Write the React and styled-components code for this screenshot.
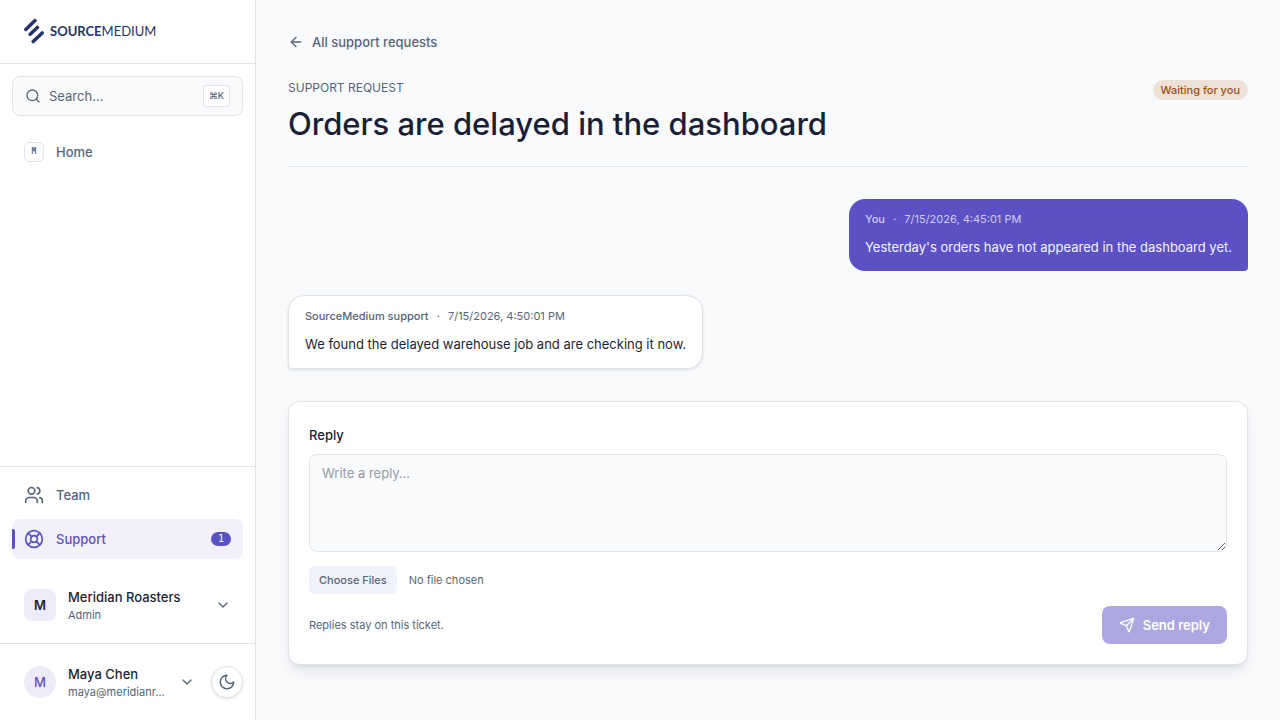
import React from "react";
import styled, { createGlobalStyle, css } from "styled-components";
import { ArrowLeft, ChevronDown, LifeBuoy, Search, Send, Users } from "lucide-react";

const c = {
  accent: "#5b51c4",
  accentSoft: "#f1f0fb",
  accentTint: "#eeebf9",
  page: "#f9fafc",
  surface: "#ffffff",
  line: "#e1e5eb",
  ink: "#1a1f36",
  muted: "#56657a",
  navy: "#2a3368",
};
const mono = '"DejaVu Sans Mono", "Liberation Mono", monospace';

const GlobalStyle = createGlobalStyle`
  *, *::before, *::after { box-sizing: border-box; }
  body {
    margin: 0;
    background: ${c.page};
    color: ${c.ink};
    font: 400 13px/20px Inter, "Liberation Sans", sans-serif;
    -webkit-font-smoothing: antialiased;
  }
  h1, p { margin: 0; }
  button, textarea, input { font: inherit; }
  button { cursor: pointer; }
`;

const Shell = styled.div`
  display: flex;
  min-height: 100vh;
`;

const Sidebar = styled.aside`
  position: sticky;
  top: 0;
  display: flex;
  flex-direction: column;
  flex: none;
  width: 256px;
  height: 100vh;
  background: ${c.surface};
  border-right: 1px solid ${c.line};
`;

const Brand = styled.a`
  display: flex;
  align-items: center;
  gap: 6px;
  height: 64px;
  padding: 0 24px 2px;
  border-bottom: 1px solid ${c.line};
  color: ${c.navy};
  font-family: Lato, Inter, sans-serif;
  font-size: 13px;
  font-weight: 400;
  text-decoration: none;

  strong { font-weight: 700; }
`;

const SearchButton = styled.button`
  display: flex;
  align-items: center;
  gap: 8px;
  height: 40px;
  margin: 12px;
  padding: 0 12px;
  border: 1px solid ${c.line};
  border-radius: 8px;
  background: ${c.page};
  color: ${c.muted};
  text-align: left;
`;

const Grow = styled.span`
  flex: 1;
`;

const Kbd = styled.kbd`
  padding: 0 5px;
  border: 1px solid ${c.line};
  border-radius: 4px;
  background: ${c.surface};
  color: ${c.muted};
  font: 500 9px/20px Inter, "DejaVu Sans Mono", sans-serif;
`;

const Nav = styled.nav`
  display: flex;
  flex-direction: column;
  gap: 4px;
  padding: ${(p) => (p.$footer ? "8px 12px" : "4px 12px")};
  ${(p) => p.$footer && css`
    margin-top: auto;
    border-top: 1px solid ${c.line};
  `}
`;

const NavItem = styled.a`
  position: relative;
  display: flex;
  align-items: center;
  gap: 12px;
  height: 40px;
  padding: 0 12px;
  border-radius: 8px;
  color: ${(p) => (p.$active ? c.accent : c.muted)};
  background: ${(p) => (p.$active ? c.accentSoft : "transparent")};
  font-weight: 500;
  text-decoration: none;

  ${(p) => p.$active && css`
    &::before {
      content: "";
      position: absolute;
      left: 0;
      top: 10px;
      width: 3px;
      height: 20px;
      border-radius: 0 2px 2px 0;
      background: ${c.accent};
    }
  `}
`;

const Monogram = styled.span`
  width: 20px;
  height: 20px;
  border: 1px solid ${c.line};
  border-radius: 5px;
  font: 700 8px/18px ${mono};
  text-align: center;
`;

const Count = styled.span`
  width: 20px;
  border-radius: 8px;
  background: ${c.accent};
  color: #fff;
  font: 400 10px/14px ${mono};
  text-align: center;
`;

const AccountRow = styled.div`
  display: flex;
  align-items: center;
  gap: 12px;
  height: 76px;
  padding: 0 12px;
  ${(p) => p.$divided && css`
    border-top: 1px solid ${c.line};
    height: 77px;
  `}
`;

const AccountButton = styled.button`
  display: flex;
  flex: 1;
  align-items: center;
  gap: 12px;
  min-width: 0;
  padding: ${(p) => (p.$compact ? "0 4px 0 12px" : "0 12px")};
  border: 0;
  background: none;
  color: ${c.muted};
  text-align: left;
`;

const Avatar = styled.span`
  flex: none;
  width: 32px;
  height: 32px;
  border-radius: ${(p) => (p.$round ? "50%" : "8px")};
  background: ${c.accentTint};
  color: ${(p) => (p.$round ? c.accent : c.ink)};
  font-size: 13px;
  font-weight: ${(p) => (p.$round ? 500 : 600)};
  line-height: 32px;
  text-align: center;
`;

const AccountText = styled.span`
  display: flex;
  flex: 1;
  flex-direction: column;
  min-width: 0;
  font-size: 11px;
  line-height: 16px;

  span { white-space: nowrap; }
  span:first-child {
    color: ${c.ink};
    font-size: 13px;
    font-weight: 500;
    line-height: 20px;
  }
`;

const ThemeButton = styled.button`
  display: grid;
  place-items: center;
  flex: none;
  width: 32px;
  height: 32px;
  padding: 0;
  border: 1px solid ${c.line};
  border-radius: 50%;
  background: ${c.surface};
  color: ${c.muted};
  box-shadow: 0 1px 3px rgb(0 0 0 / 0.12);
`;

const Main = styled.main`
  flex: 1;
  min-width: 0;
  padding: 32px;
`;

const BackLink = styled.a`
  display: inline-flex;
  align-items: center;
  gap: 8px;
  color: ${c.muted};
  font-weight: 500;
  text-decoration: none;
  vertical-align: top;
`;

const PageHeader = styled.header`
  display: flex;
  align-items: flex-start;
  justify-content: space-between;
  gap: 16px;
  margin-top: 28px;
  padding-bottom: 22px;
  border-bottom: 1px solid ${c.line};
`;

const Eyebrow = styled.p`
  color: ${c.muted};
  font-size: 12px;
  line-height: 16px;
`;

const Title = styled.h1`
  margin-top: 8px;
  font-size: 31px;
  font-weight: 500;
  line-height: 40px;
`;

const Status = styled.span`
  flex: none;
  padding: 0 8px;
  border-radius: 10px;
  background: #ede1d8;
  color: #a0520f;
  font-size: 11px;
  font-weight: 500;
  line-height: 20px;
`;

const Thread = styled.section`
  display: flex;
  flex-direction: column;
  gap: 24px;
  padding: 32px 0;
`;

const Message = styled.article`
  align-self: ${(p) => (p.$own ? "flex-end" : "flex-start")};
  max-width: 80%;
  padding: 12px 16px;
  border-radius: ${(p) => (p.$own ? "16px 16px 4px 16px" : "16px 16px 16px 4px")};
  background: ${(p) => (p.$own ? c.accent : c.surface)};
  color: ${(p) => (p.$own ? "#f4f3fc" : c.ink)};
  ${(p) => !p.$own && css`
    border: 1px solid ${c.line};
    box-shadow: 0 1px 3px rgb(0 0 0 / 0.12);
  `}

  p { line-height: 24px; }
`;

const Meta = styled.header`
  display: flex;
  gap: 8px;
  margin-bottom: 8px;
  color: ${(p) => (p.$own ? "#d0ccf0" : c.muted)};
  font-size: 11px;
  line-height: 16px;

  span { font-weight: 500; }
`;

const Composer = styled.form`
  padding: 20px;
  border: 1px solid ${c.line};
  border-radius: 12px;
  background: ${c.surface};
  box-shadow: 0 8px 16px -4px rgb(15 23 42 / 0.12), 0 2px 4px -2px rgb(15 23 42 / 0.12);
`;

const FieldLabel = styled.label`
  display: block;
  margin-bottom: 6px;
  font-weight: 500;
  line-height: 26px;
`;

const ReplyBox = styled.textarea`
  display: block;
  width: 100%;
  height: 98px;
  padding: 8px 12px;
  border: 1px solid ${c.line};
  border-radius: 8px;
  background: ${c.page};
  color: ${c.ink};
  resize: vertical;

  &::placeholder { color: #969ba6; }
`;

const FilePicker = styled.input`
  display: block;
  width: 100%;
  height: 28px;
  margin: 14px 0 12px;
  color: ${c.muted};
  font-size: 11px;
  line-height: 16px;

  &::file-selector-button {
    margin: 0 12px 0 0;
    padding: 6px 10px;
    border: 0;
    border-radius: 5px;
    background: #f0f3f9;
    color: ${c.muted};
    font: inherit;
    font-weight: 500;
  }
`;

const ComposerFooter = styled.div`
  display: flex;
  align-items: center;
  justify-content: space-between;
  color: ${c.muted};
  font-size: 11px;
`;

const SendButton = styled.button`
  display: flex;
  align-items: center;
  gap: 8px;
  height: 38px;
  padding: 0 16px;
  border: 1px solid transparent;
  border-radius: 8px;
  background: ${c.accent};
  color: #fff;
  font-size: 13px;
  font-weight: 600;

  &:disabled { opacity: 0.5; cursor: default; }
`;

function BrandMark() {
  return (
    <svg width="20" height="26" viewBox="0 0 20 26" fill="none" stroke="currentColor" strokeWidth="3.5" strokeLinecap="round" aria-hidden="true">
      <path d="M1.8 11.4 11 2.6M6.2 16.2l7.2-6.8M9.2 23.6l9-8.7" />
    </svg>
  );
}

function MoonIcon() {
  return (
    <svg width="18" height="18" viewBox="0 0 24 24" fill="none" stroke="currentColor" strokeWidth="2" strokeLinecap="round" strokeLinejoin="round" aria-hidden="true">
      <path d="M12 3a6 6 0 0 0 9 9 9 9 0 1 1-9-9Z" />
    </svg>
  );
}

function ChatMessage({ own, author, time, children }) {
  return (
    <Message $own={own}>
      <Meta $own={own}>
        <span>{author}</span>
        <span aria-hidden="true">·</span>
        <time>{time}</time>
      </Meta>
      <p>{children}</p>
    </Message>
  );
}

export default function App() {
  return (
    <>
      <GlobalStyle />
      <Shell>
        <Sidebar>
          <Brand href="#">
            <BrandMark />
            <span><strong>SOURCE</strong>MEDIUM</span>
          </Brand>
          <SearchButton type="button">
            <Search size={16} />
            <Grow>Search…</Grow>
            <Kbd>⌘K</Kbd>
          </SearchButton>
          <Nav aria-label="Main">
            <NavItem href="#home"><Monogram>M</Monogram>Home</NavItem>
          </Nav>
          <Nav $footer aria-label="Workspace">
            <NavItem href="#team"><Users size={20} />Team</NavItem>
            <NavItem href="#support" $active aria-current="page">
              <LifeBuoy size={20} />
              <Grow>Support</Grow>
              <Count>1</Count>
            </NavItem>
          </Nav>
          <AccountRow>
            <AccountButton type="button">
              <Avatar>M</Avatar>
              <AccountText><span>Meridian Roasters</span><span>Admin</span></AccountText>
              <ChevronDown size={16} />
            </AccountButton>
          </AccountRow>
          <AccountRow $divided>
            <AccountButton type="button" $compact>
              <Avatar $round>M</Avatar>
              <AccountText><span>Maya Chen</span><span>maya@meridianr…</span></AccountText>
              <ChevronDown size={16} />
            </AccountButton>
            <ThemeButton type="button" aria-label="Switch to dark theme"><MoonIcon /></ThemeButton>
          </AccountRow>
        </Sidebar>
        <Main>
          <BackLink href="#support"><ArrowLeft size={16} />All support requests</BackLink>
          <PageHeader>
            <div>
              <Eyebrow>SUPPORT REQUEST</Eyebrow>
              <Title>Orders are delayed in the dashboard</Title>
            </div>
            <Status>Waiting for you</Status>
          </PageHeader>
          <Thread aria-label="Conversation">
            <ChatMessage own author="You" time="7/15/2026, 4:45:01 PM">
              Yesterday's orders have not appeared in the dashboard yet.
            </ChatMessage>
            <ChatMessage author="SourceMedium support" time="7/15/2026, 4:50:01 PM">
              We found the delayed warehouse job and are checking it now.
            </ChatMessage>
          </Thread>
          <Composer onSubmit={(e) => e.preventDefault()}>
            <FieldLabel htmlFor="reply">Reply</FieldLabel>
            <ReplyBox id="reply" placeholder="Write a reply…" />
            <FilePicker type="file" multiple aria-label="Attachments" />
            <ComposerFooter>
              <span>Replies stay on this ticket.</span>
              <SendButton type="submit" disabled><Send size={16} />Send reply</SendButton>
            </ComposerFooter>
          </Composer>
        </Main>
      </Shell>
    </>
  );
}
